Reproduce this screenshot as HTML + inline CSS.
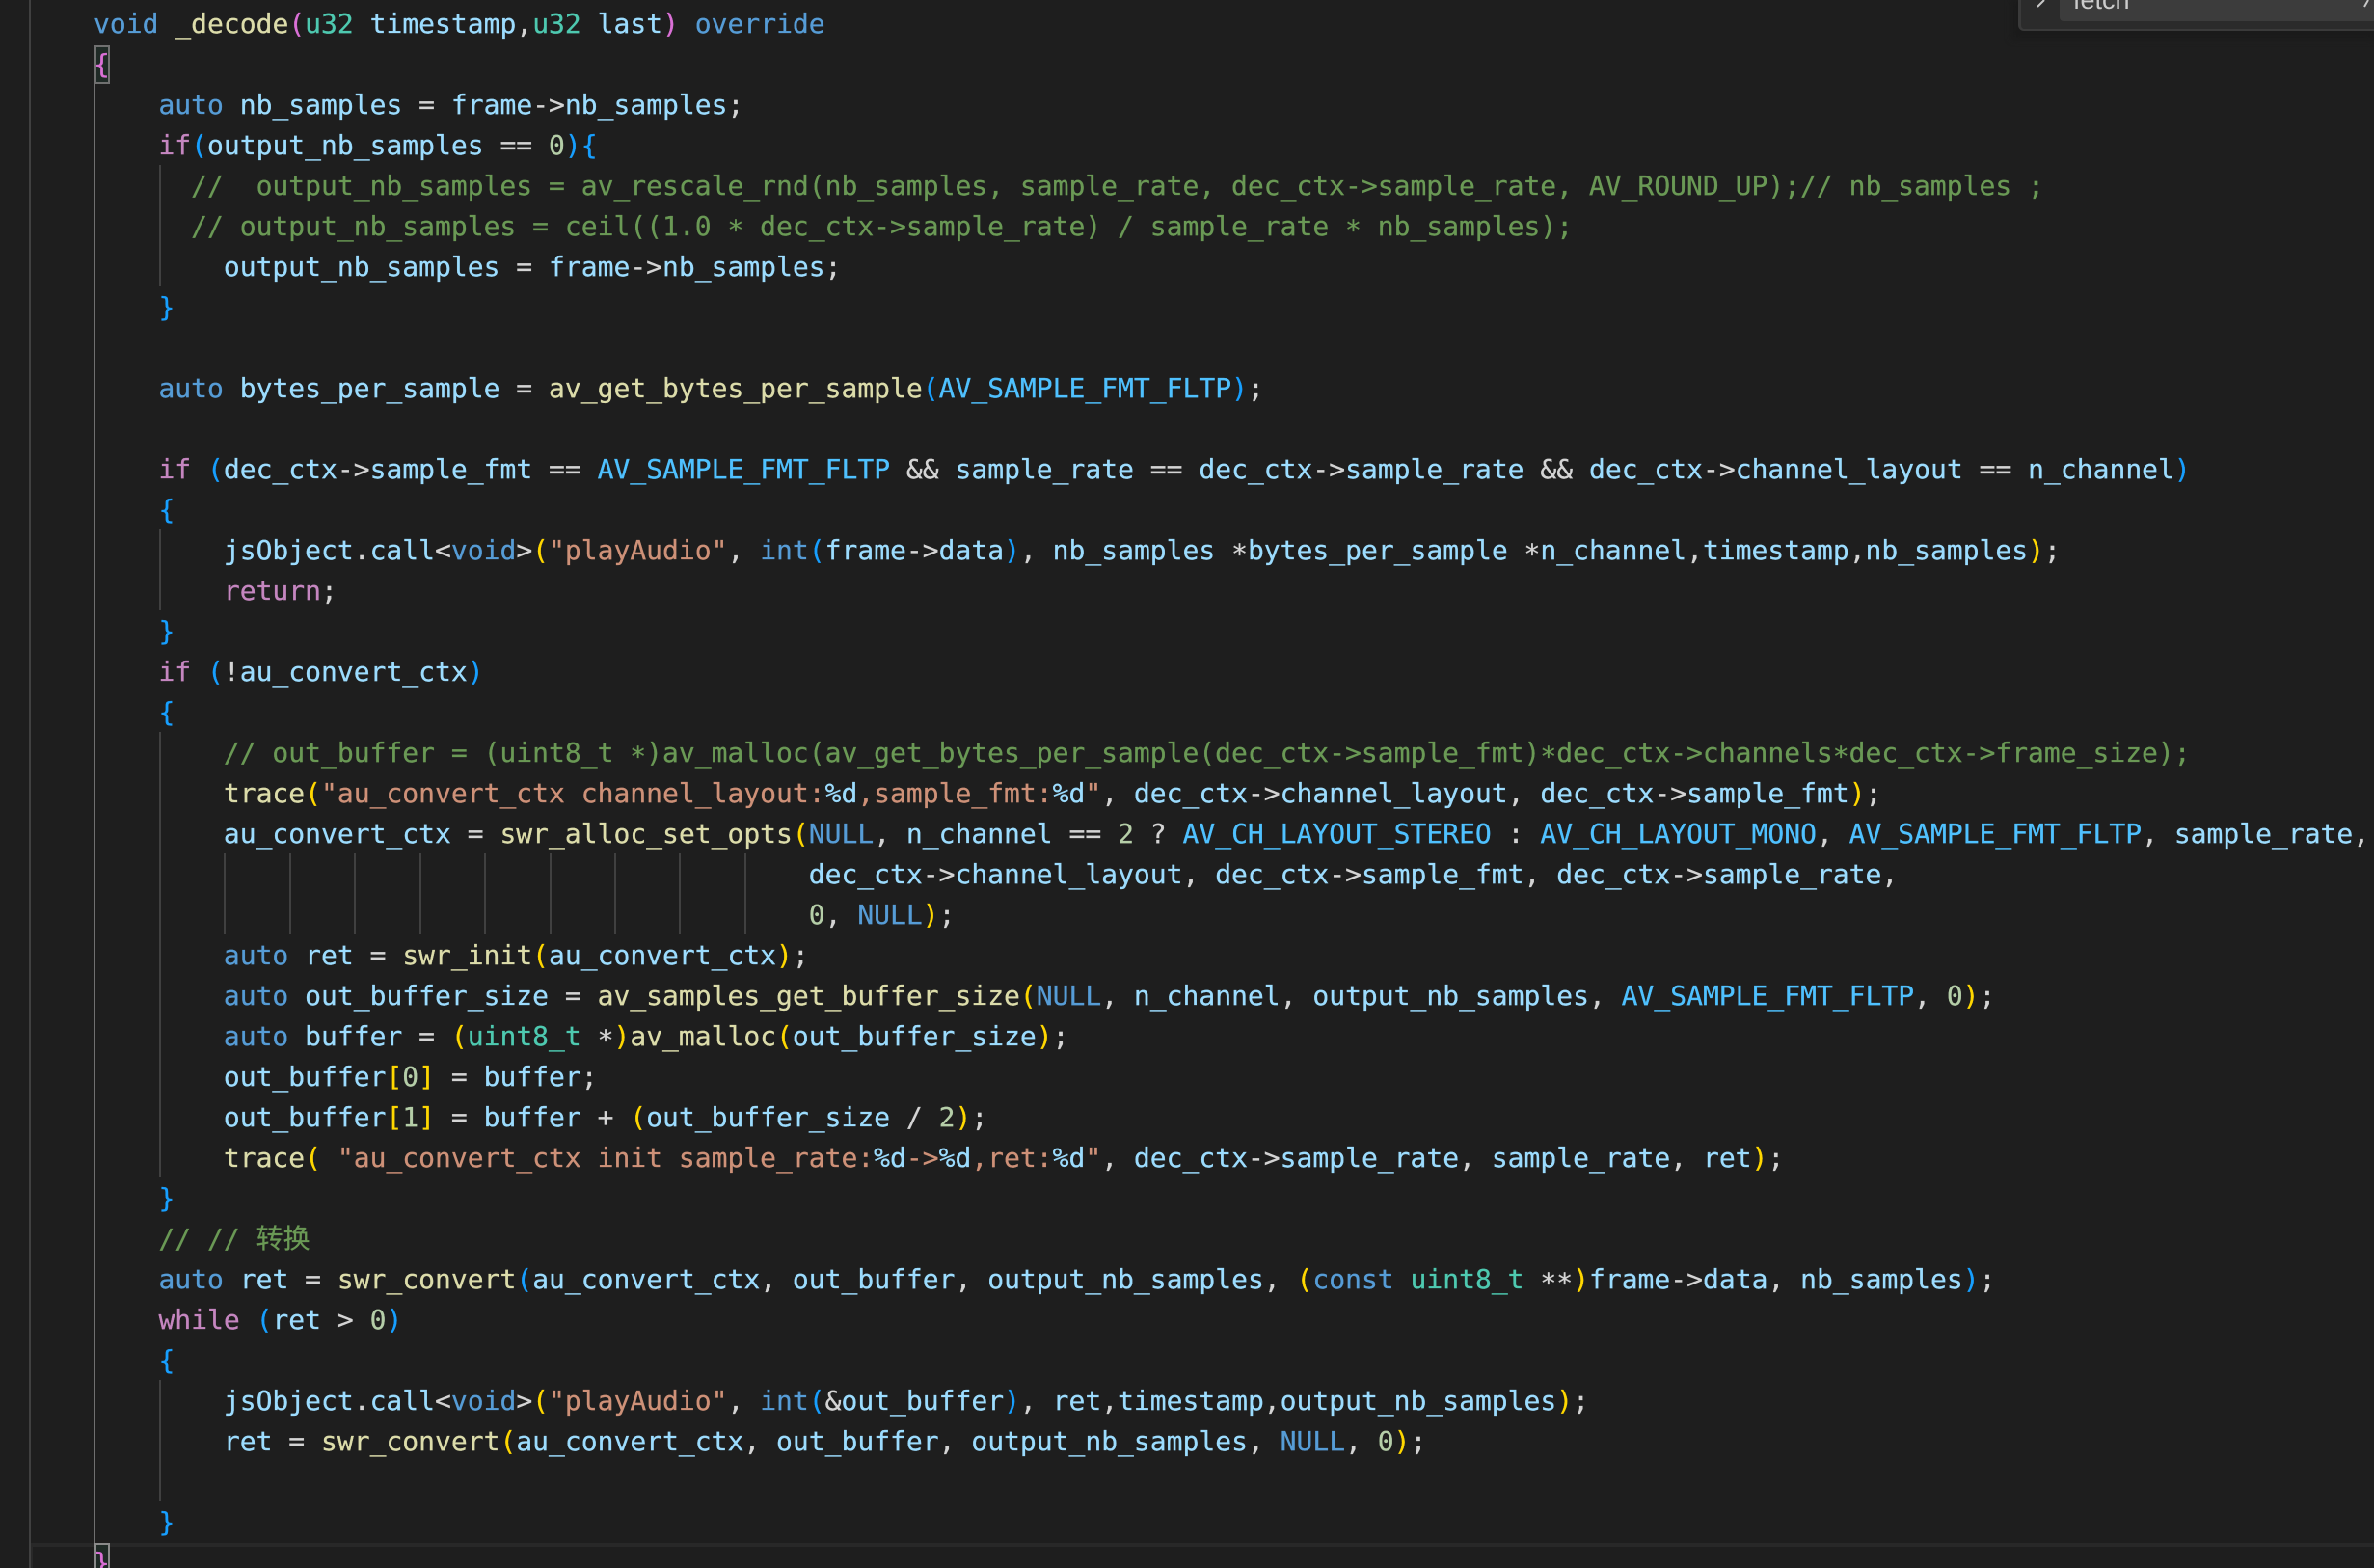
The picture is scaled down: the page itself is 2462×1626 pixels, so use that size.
<!DOCTYPE html>
<html><head><meta charset="utf-8">
<style>
html,body{margin:0;padding:0;background:#1e1e1e;}
#r{position:relative;width:2462px;height:1626px;overflow:hidden;background:#1e1e1e;font-family:"DejaVu Sans Mono","Noto Sans CJK SC",monospace;font-size:28px;line-height:42px;color:#d4d4d4;}
.l{position:absolute;left:97px;margin-top:1px;height:42px;white-space:pre;-webkit-text-stroke:0.25px currentColor;}
.a{position:absolute;}
.g{position:absolute;width:2px;background:#404040;}
i{font-style:normal;position:relative;top:4px;}
.k{color:#569cd6}.c{color:#c586c0}.t{color:#4ec9b0}.v{color:#9cdcfe}.f{color:#dcdcaa}.s{color:#ce9178}.n{color:#b5cea8}.o{color:#6a9955}.m{color:#4fc1ff}.p{color:#da70d6}.b{color:#179fff}.y{color:#ffd700}
</style></head><body><div id="r">
<div class="a" style="left:30px;top:0;width:2px;height:1626px;background:#404040"></div>
<div class="a" style="left:32px;top:1600px;width:2430px;height:4px;background:#282828"></div>
<div class="a" style="left:32px;top:1604px;width:2px;height:22px;background:#282828"></div>
<div class="a" style="left:97px;top:87px;width:2px;height:1513px;background:#707070"></div>
<div class="a" style="left:98px;top:47px;width:12px;height:36px;border:2px solid #707070;background:#1f2a26"></div>
<div class="a" style="left:98px;top:1600px;width:12px;height:30px;border:2px solid #8a8a8a;background:#1f2a26"></div>
<div class="g" style="left:165px;top:171px;height:126px"></div>
<div class="g" style="left:165px;top:549px;height:84px"></div>
<div class="g" style="left:165px;top:759px;height:462px"></div>
<div class="g" style="left:165px;top:1431px;height:126px"></div>
<div class="g" style="left:232px;top:885px;height:84px"></div>
<div class="g" style="left:300px;top:885px;height:84px"></div>
<div class="g" style="left:367px;top:885px;height:84px"></div>
<div class="g" style="left:435px;top:885px;height:84px"></div>
<div class="g" style="left:502px;top:885px;height:84px"></div>
<div class="g" style="left:570px;top:885px;height:84px"></div>
<div class="g" style="left:637px;top:885px;height:84px"></div>
<div class="g" style="left:704px;top:885px;height:84px"></div>
<div class="g" style="left:772px;top:885px;height:84px"></div>

<div class="l" style="top:3px"><span class="k">void</span> <span class="f">_decode</span><span class="p">(</span><span class="t">u32</span> <span class="v">timestamp</span>,<span class="t">u32</span> <span class="v">last</span><span class="p">)</span> <span class="k">override</span></div>
<div class="l" style="top:45px"><span class="p">{</span></div>
<div class="l" style="top:87px">    <span class="k">auto</span> <span class="v">nb_samples</span> = <span class="v">frame</span>-&gt;<span class="v">nb_samples</span>;</div>
<div class="l" style="top:129px">    <span class="c">if</span><span class="b">(</span><span class="v">output_nb_samples</span> == <span class="n">0</span><span class="b">){</span></div>
<div class="l o" style="top:171px">      //  output_nb_samples = av_rescale_rnd(nb_samples, sample_rate, dec_ctx-&gt;sample_rate, AV_ROUND_UP);// nb_samples ;</div>
<div class="l o" style="top:213px">      // output_nb_samples = ceil((1.0 <i>*</i> dec_ctx-&gt;sample_rate) / sample_rate <i>*</i> nb_samples);</div>
<div class="l" style="top:255px">        <span class="v">output_nb_samples</span> = <span class="v">frame</span>-&gt;<span class="v">nb_samples</span>;</div>
<div class="l" style="top:297px">    <span class="b">}</span></div>
<div class="l" style="top:381px">    <span class="k">auto</span> <span class="v">bytes_per_sample</span> = <span class="f">av_get_bytes_per_sample</span><span class="b">(</span><span class="m">AV_SAMPLE_FMT_FLTP</span><span class="b">)</span>;</div>
<div class="l" style="top:465px">    <span class="c">if</span> <span class="b">(</span><span class="v">dec_ctx</span>-&gt;<span class="v">sample_fmt</span> == <span class="m">AV_SAMPLE_FMT_FLTP</span> &amp;&amp; <span class="v">sample_rate</span> == <span class="v">dec_ctx</span>-&gt;<span class="v">sample_rate</span> &amp;&amp; <span class="v">dec_ctx</span>-&gt;<span class="v">channel_layout</span> == <span class="v">n_channel</span><span class="b">)</span></div>
<div class="l" style="top:507px">    <span class="b">{</span></div>
<div class="l" style="top:549px">        <span class="v">jsObject</span>.<span class="v">call</span>&lt;<span class="k">void</span>&gt;<span class="y">(</span><span class="s">"playAudio"</span>, <span class="k">int</span><span class="b">(</span><span class="v">frame</span>-&gt;<span class="v">data</span><span class="b">)</span>, <span class="v">nb_samples</span> <i>*</i><span class="v">bytes_per_sample</span> <i>*</i><span class="v">n_channel</span>,<span class="v">timestamp</span>,<span class="v">nb_samples</span><span class="y">)</span>;</div>
<div class="l" style="top:591px">        <span class="c">return</span>;</div>
<div class="l" style="top:633px">    <span class="b">}</span></div>
<div class="l" style="top:675px">    <span class="c">if</span> <span class="b">(</span>!<span class="v">au_convert_ctx</span><span class="b">)</span></div>
<div class="l" style="top:717px">    <span class="b">{</span></div>
<div class="l o" style="top:759px">        // out_buffer = (uint8_t <i>*</i>)av_malloc(av_get_bytes_per_sample(dec_ctx-&gt;sample_fmt)<i>*</i>dec_ctx-&gt;channels<i>*</i>dec_ctx-&gt;frame_size);</div>
<div class="l" style="top:801px">        <span class="f">trace</span><span class="y">(</span><span class="s">"au_convert_ctx channel_layout:</span><span class="v">%d</span><span class="s">,sample_fmt:</span><span class="v">%d</span><span class="s">"</span>, <span class="v">dec_ctx</span>-&gt;<span class="v">channel_layout</span>, <span class="v">dec_ctx</span>-&gt;<span class="v">sample_fmt</span><span class="y">)</span>;</div>
<div class="l" style="top:843px">        <span class="v">au_convert_ctx</span> = <span class="f">swr_alloc_set_opts</span><span class="y">(</span><span class="k">NULL</span>, <span class="v">n_channel</span> == <span class="n">2</span> ? <span class="m">AV_CH_LAYOUT_STEREO</span> : <span class="m">AV_CH_LAYOUT_MONO</span>, <span class="m">AV_SAMPLE_FMT_FLTP</span>, <span class="v">sample_rate</span>,</div>
<div class="l" style="top:885px">                                            <span class="v">dec_ctx</span>-&gt;<span class="v">channel_layout</span>, <span class="v">dec_ctx</span>-&gt;<span class="v">sample_fmt</span>, <span class="v">dec_ctx</span>-&gt;<span class="v">sample_rate</span>,</div>
<div class="l" style="top:927px">                                            <span class="n">0</span>, <span class="k">NULL</span><span class="y">)</span>;</div>
<div class="l" style="top:969px">        <span class="k">auto</span> <span class="v">ret</span> = <span class="f">swr_init</span><span class="y">(</span><span class="v">au_convert_ctx</span><span class="y">)</span>;</div>
<div class="l" style="top:1011px">        <span class="k">auto</span> <span class="v">out_buffer_size</span> = <span class="f">av_samples_get_buffer_size</span><span class="y">(</span><span class="k">NULL</span>, <span class="v">n_channel</span>, <span class="v">output_nb_samples</span>, <span class="m">AV_SAMPLE_FMT_FLTP</span>, <span class="n">0</span><span class="y">)</span>;</div>
<div class="l" style="top:1053px">        <span class="k">auto</span> <span class="v">buffer</span> = <span class="y">(</span><span class="t">uint8_t</span> <i>*</i><span class="y">)</span><span class="f">av_malloc</span><span class="y">(</span><span class="v">out_buffer_size</span><span class="y">)</span>;</div>
<div class="l" style="top:1095px">        <span class="v">out_buffer</span><span class="y">[</span><span class="n">0</span><span class="y">]</span> = <span class="v">buffer</span>;</div>
<div class="l" style="top:1137px">        <span class="v">out_buffer</span><span class="y">[</span><span class="n">1</span><span class="y">]</span> = <span class="v">buffer</span> + <span class="y">(</span><span class="v">out_buffer_size</span> / <span class="n">2</span><span class="y">)</span>;</div>
<div class="l" style="top:1179px">        <span class="f">trace</span><span class="y">(</span> <span class="s">"au_convert_ctx init sample_rate:</span><span class="v">%d</span><span class="s">-&gt;</span><span class="v">%d</span><span class="s">,ret:</span><span class="v">%d</span><span class="s">"</span>, <span class="v">dec_ctx</span>-&gt;<span class="v">sample_rate</span>, <span class="v">sample_rate</span>, <span class="v">ret</span><span class="y">)</span>;</div>
<div class="l" style="top:1221px">    <span class="b">}</span></div>
<div class="l o" style="top:1263px">    // // 转换</div>
<div class="l" style="top:1305px">    <span class="k">auto</span> <span class="v">ret</span> = <span class="f">swr_convert</span><span class="b">(</span><span class="v">au_convert_ctx</span>, <span class="v">out_buffer</span>, <span class="v">output_nb_samples</span>, <span class="y">(</span><span class="k">const</span> <span class="t">uint8_t</span> <i>**</i><span class="y">)</span><span class="v">frame</span>-&gt;<span class="v">data</span>, <span class="v">nb_samples</span><span class="b">)</span>;</div>
<div class="l" style="top:1347px">    <span class="c">while</span> <span class="b">(</span><span class="v">ret</span> &gt; <span class="n">0</span><span class="b">)</span></div>
<div class="l" style="top:1389px">    <span class="b">{</span></div>
<div class="l" style="top:1431px">        <span class="v">jsObject</span>.<span class="v">call</span>&lt;<span class="k">void</span>&gt;<span class="y">(</span><span class="s">"playAudio"</span>, <span class="k">int</span><span class="b">(</span>&amp;<span class="v">out_buffer</span><span class="b">)</span>, <span class="v">ret</span>,<span class="v">timestamp</span>,<span class="v">output_nb_samples</span><span class="y">)</span>;</div>
<div class="l" style="top:1473px">        <span class="v">ret</span> = <span class="f">swr_convert</span><span class="y">(</span><span class="v">au_convert_ctx</span>, <span class="v">out_buffer</span>, <span class="v">output_nb_samples</span>, <span class="k">NULL</span>, <span class="n">0</span><span class="y">)</span>;</div>
<div class="l" style="top:1557px">    <span class="b">}</span></div>
<div class="l" style="top:1599px"><span class="p">}</span></div>

<div class="a" style="left:2087px;top:0;width:375px;height:40px;background:#1a1a1a;filter:blur(4px)"></div>
<div class="a" style="left:2093px;top:-10px;width:369px;height:42px;background:#2b2b2b;border-radius:0 0 0 6px;box-sizing:border-box;border-left:3px solid #3a3a3a;border-bottom:2px solid #3a3a3a"></div>
<div class="a" style="left:2136px;top:-10px;width:326px;height:32px;background:#3c3c3c;border-radius:0 0 0 4px"></div>
<svg class="a" style="left:2111px;top:0" width="16" height="10" viewBox="0 0 16 10"><path d="M2 7 L9 0" stroke="#c8c8c8" stroke-width="2" fill="none"/></svg>
<div class="a" style="left:2150px;top:-15px;font:27px/30px 'Liberation Sans',sans-serif;color:#cccccc">fetch</div>
<svg class="a" style="left:2450px;top:0" width="12" height="8" viewBox="0 0 12 8"><path d="M2 7 L6 0" stroke="#c8c8c8" stroke-width="2" fill="none"/></svg>
</div></body></html>
